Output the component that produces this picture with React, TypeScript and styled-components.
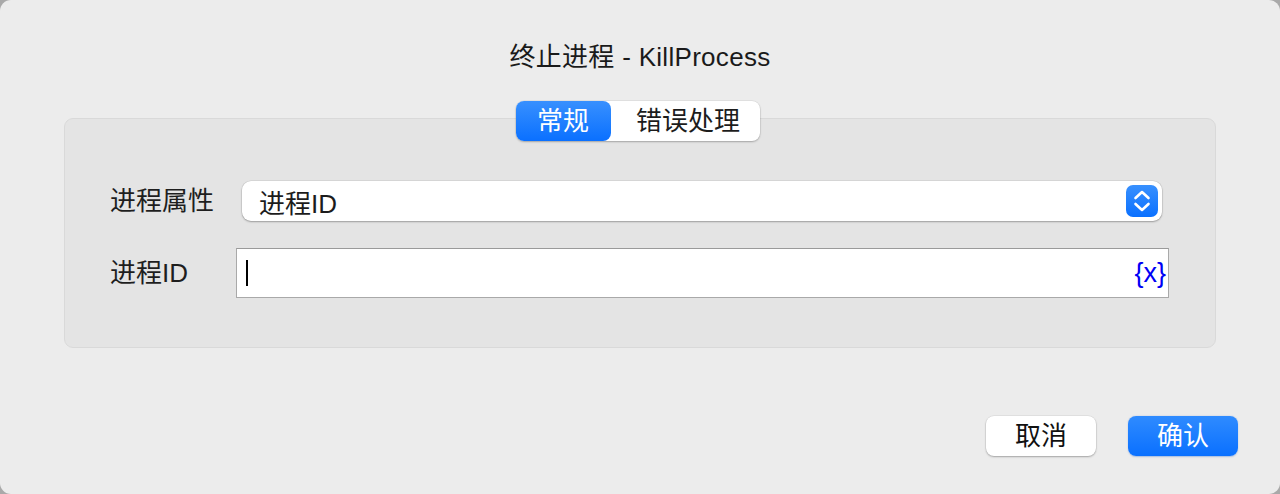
import React from "react";
import styled, { createGlobalStyle } from "styled-components";

const Global = createGlobalStyle`
  html, body { margin: 0; padding: 0; background: #a9a9a9; }
  body { font-family: "Liberation Sans", "Noto Sans CJK SC", sans-serif; }
  * { box-sizing: border-box; }
`;

const Window = styled.div`
  width: 1280px;
  height: 494px;
  background: #ececec;
  border-radius: 11px;
  display: flex;
  flex-direction: column;
  font-family: "Liberation Sans", "Noto Sans CJK SC", sans-serif;
  font-size: 26px;
  color: #1c1c1c;
  overflow: hidden;
`;

const Title = styled.div`
  margin-top: 41px;
  height: 32px;
  line-height: 32px;
  text-align: center;
  color: #1a1a1a;
  letter-spacing: 0.3px;
`;

const Segmented = styled.div`
  position: relative;
  z-index: 1;
  align-self: center;
  margin-top: 28px;
  margin-right: 4px;
  display: flex;
  height: 40px;
  border-radius: 8px;
  background: #fff;
  box-shadow: 0 1px 2px rgba(0, 0, 0, 0.25), 0 0 0 0.5px rgba(0, 0, 0, 0.08);
`;

const Segment = styled.div<{ $active?: boolean }>`
  height: 40px;
  line-height: 40px;
  padding: ${(p) => (p.$active ? "0 22px 0 21px" : "0 20px 0 25px")};
  border-radius: 8px;
  color: ${(p) => (p.$active ? "#fff" : "#1c1c1c")};
  background: ${(p) =>
    p.$active ? "linear-gradient(#3890fe, #0a70ff)" : "transparent"};
`;

const Panel = styled.div`
  margin: -23px 64px 0 64px;
  height: 230px;
  background: #e4e4e4;
  border: 1px solid #d9d9d9;
  border-radius: 9px;
  padding: 62px 46px 0 45px;
  display: grid;
  grid-template-columns: 126px 1fr;
  grid-auto-rows: auto;
  row-gap: 27px;
  align-items: center;
  align-content: start;
`;

const Label = styled.div`
  line-height: 32px;
  color: #1e1e1e;
`;

const Select = styled.div`
  margin: 0 7px 0 6px;
  height: 40px;
  border-radius: 9px;
  background: #fff;
  box-shadow: 0 1px 2px rgba(0, 0, 0, 0.28), 0 0 0 0.5px rgba(0, 0, 0, 0.1);
  display: flex;
  align-items: center;
  justify-content: space-between;
  padding: 0 4px 0 17px;
`;

const Stepper = styled.div`
  width: 32px;
  height: 32px;
  border-radius: 7px;
  background: linear-gradient(#3890fe, #0a70ff);
  display: flex;
  align-items: center;
  justify-content: center;
`;

const Input = styled.div`
  height: 50px;
  background: #fff;
  border: 1px solid #a9a9a9;
  border-top-color: #9a9a9a;
  display: flex;
  align-items: center;
  justify-content: space-between;
  padding: 0 2px 0 9px;
`;

const Caret = styled.div`
  width: 2px;
  height: 26px;
  background: #000;
`;

const VarToken = styled.span`
  color: #0000f5;
  font-size: 27px;
  line-height: 32px;
`;

const Footer = styled.div`
  margin-top: auto;
  margin-bottom: 38px;
  padding-right: 42px;
  display: flex;
  justify-content: flex-end;
  gap: 32px;
`;

const Button = styled.div<{ $primary?: boolean }>`
  width: 110px;
  height: 40px;
  line-height: 40px;
  text-align: center;
  border-radius: 8px;
  color: ${(p) => (p.$primary ? "#fff" : "#111")};
  background: ${(p) => (p.$primary ? "linear-gradient(#2f8bff, #0a70ff)" : "#fff")};
  box-shadow: ${(p) =>
    p.$primary
      ? "0 0.5px 1.5px rgba(0, 80, 200, 0.3)"
      : "0 1px 2px rgba(0, 0, 0, 0.28), 0 0 0 0.5px rgba(0, 0, 0, 0.08)"};
`;

export default function App() {
  return (
    <>
      <Global />
      <Window>
        <Title>终止进程 - KillProcess</Title>
        <Segmented>
          <Segment $active>常规</Segment>
          <Segment>错误处理</Segment>
        </Segmented>
        <Panel>
          <Label>进程属性</Label>
          <Select>
            <span>进程ID</span>
            <Stepper>
              <svg width="32" height="32" viewBox="0 0 32 32" fill="none">
                <polyline
                  points="9.5,13 16,7 22.5,13"
                  stroke="#fff"
                  strokeWidth="2.6"
                  strokeLinecap="round"
                  strokeLinejoin="round"
                />
                <polyline
                  points="9.5,19 16,25 22.5,19"
                  stroke="#fff"
                  strokeWidth="2.6"
                  strokeLinecap="round"
                  strokeLinejoin="round"
                />
              </svg>
            </Stepper>
          </Select>
          <Label>进程ID</Label>
          <Input>
            <Caret />
            <VarToken>{"{x}"}</VarToken>
          </Input>
        </Panel>
        <Footer>
          <Button>取消</Button>
          <Button $primary>确认</Button>
        </Footer>
      </Window>
    </>
  );
}
